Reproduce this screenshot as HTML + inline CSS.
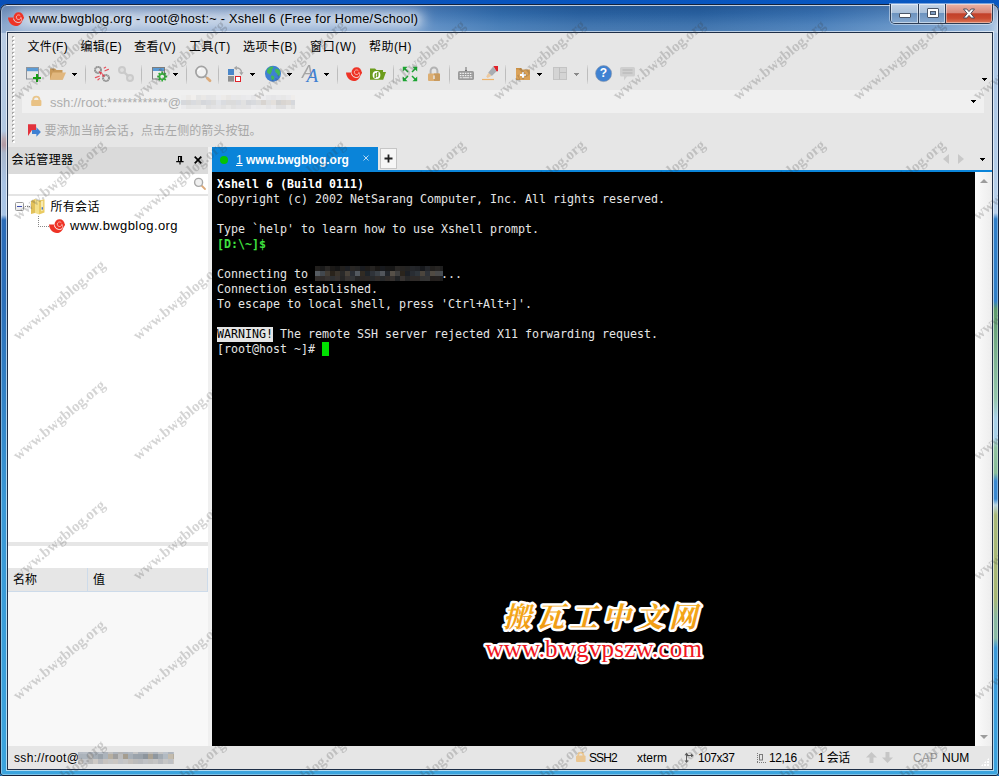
<!DOCTYPE html>
<html><head><meta charset="utf-8"><title>Xshell</title>
<style>
html,body{margin:0;padding:0;}
body{width:999px;height:776px;overflow:hidden;position:relative;background:linear-gradient(90deg,#0950b8,#0858c2);font-family:"Liberation Sans","Noto Sans CJK SC",sans-serif;font-size:12px;color:#000;}
div,span,svg{position:absolute;box-sizing:border-box;}
pre span,pre b{position:static;}
svg{overflow:visible;}
#frame{left:0;top:4px;width:999px;height:772px;border-radius:7px 7px 3px 3px;overflow:hidden;background:#3a8fd0;box-shadow:inset 0 0 0 1px #16294a;}
#client{left:8px;top:33px;width:984px;height:736px;background:#e6e6e6;box-shadow:0 0 0 1px #1f2f48,0 0 0 2px rgba(255,255,255,.6);}
#title{left:29px;top:11px;font-size:12.7px;line-height:16px;letter-spacing:.26px;white-space:nowrap;color:#000;}
.t{font-size:12px;line-height:14px;white-space:nowrap;}
#addr{left:22px;top:90px;width:962px;height:23px;background:#f0f0f0;}
#term{z-index:5;left:212px;top:172px;width:763px;height:574px;background:#000;}
#term pre{margin:0;position:absolute;left:5px;top:5px;font-family:"DejaVu Sans Mono","Liberation Mono",monospace;font-size:11.63px;line-height:15px;color:#e5e5e5;}
.sep{width:1px;height:19px;top:65px;background:linear-gradient(180deg,#dcdcdc 0,#bdbdbd 25%,#bdbdbd 75%,#dcdcdc 100%);}
.dd{width:1px;height:1px;color:#000;background:currentColor;transform:translate(2px,2px);box-shadow:-1px -1px,0 -1px,1px -1px,-2px -2px,-1px -2px,0 -2px,1px -2px,2px -2px;}
#wm{z-index:3;opacity:.22;left:0;top:0;width:999px;height:776px;overflow:hidden;pointer-events:none;}
#wm span{font-family:"Liberation Serif",serif;font-weight:bold;font-size:15px;line-height:16px;color:#3c3c3c;white-space:nowrap;transform-origin:0 100%;transform:rotate(-40deg);}
.blur2{left:0;top:0;width:0;height:0;filter:blur(.6px);}
</style></head><body>
<svg width="0" height="0" style="left:0;top:0"><defs>
<symbol id="swirl" viewBox="0 0 16 14" overflow="visible">
<path d="M0,5.6 L4.9,5.6 C5.2,8.6 7.6,10.8 10.6,10.8 C12.6,10.8 13.6,9.8 14,8 L14.4,6.4 C14.8,10.4 11.8,14 7.8,14 C3.6,14 0.3,10.4 0,5.6 Z" fill="#ee3326"/>
<circle cx="10.6" cy="5.2" r="5.05" fill="#ee3326"/>
<path d="M14.3,6.4 H16 V4.6Z" fill="#ee3326"/>
<path d="M5.6,6.9 C6.2,9.6 8.4,10.6 10.6,10.55 C11.8,10.5 12.6,10 13.2,9.2 C13.9,8.2 13.6,6.6 13,5.4" fill="none" stroke="#ffe4de" stroke-width=".7" opacity=".9"/>
<path d="M12.4,3.8 A2.3,2.3 0 1 0 12.9,5.4" fill="none" stroke="#ffe4de" stroke-width=".75" opacity=".9"/>
</symbol>
</defs></svg>
<div id="frame">
 <div style="left:0;top:0;width:999px;height:30px;background:linear-gradient(90deg,#7e9ec8 0,#86a4cc 12%,#7c9ecb 30%,#6791c6 40%,#4a80bc 44%,#3470b0 50%,#2b65a5 58%,#2a64a4 70%,#3a74b4 82%,#4f84be 88%,#6a96c8 94%,#8db0d8 99%,#b8cee8 100%)"></div>
 <div style="left:0;top:0;width:999px;height:30px;background:linear-gradient(180deg,rgba(0,20,70,.22) 0,rgba(0,20,70,.08) 30%,rgba(255,255,255,.10) 70%,rgba(255,255,255,.16) 100%)"></div>
 <div style="left:14px;top:7px;width:410px;height:17px;border-radius:8px;background:rgba(255,255,255,.56);filter:blur(6px)"></div>
 <div style="left:0;top:29px;width:8px;height:743px;background:linear-gradient(180deg,#b9cce4 0,#b2c8e2 98px,#b6a8b2 106px,#b29aa4 112px,#a8b6cc 120px,#a9c3e4 150px,#a9c5e6 182px,#2c6cb8 187px,#2c70ba 270px,#3a98d6 470px,#3ba4de 743px)"></div>
 <div style="left:992px;top:29px;width:7px;height:743px;background:linear-gradient(180deg,#a9c4e4 0,#b6cfea 180px,#2f7ec8 186px,#2f7ec8 268px,#5c9a6c 276px,#7fb594 330px,#93c6ac 366px,#a8d0e8 385px,#a8d0e8 405px,#8fc2a0 415px,#86bc98 440px,#3a88d0 448px,#3a88d0 466px,#b8d4e0 472px,#a8b878 482px,#a6b674 565px,#88b8a0 585px,#8abaa4 605px,#3a98d8 615px,#3ba2de 743px)"></div>
 <div style="left:0;top:764px;width:999px;height:8px;background:#3ba4de"></div>
 <div style="left:1px;top:1px;width:997px;height:770px;border-radius:6px 6px 2px 2px;border:1px solid rgba(255,255,255,.35)"></div>
 <div style="left:6px;top:1px;width:987px;height:1px;background:rgba(255,255,255,.55)"></div>
 <div style="left:0;top:0;width:999px;height:772px;border-radius:7px 7px 3px 3px;border:1px solid #14223c"></div>
</div>
<svg width="16" height="14" style="left:8px;top:12px"><use href="#swirl"/></svg>
<div id="title" style="text-shadow:0 0 6px rgba(255,255,255,.8)">www.bwgblog.org - root@host:~ - Xshell 6 (Free for Home/School)</div>
<!-- window buttons -->
<div style="left:890px;top:4px;width:103px;height:20px;border:1px solid #2c3c54;border-top:0;border-radius:0 0 5px 5px;overflow:hidden;box-shadow:0 0 0 1px rgba(255,255,255,.45)">
 <div style="left:0;top:0;width:28px;height:19px;background:linear-gradient(180deg,#c3d3e6 0,#a9c0da 45%,#6d93bf 50%,#86a9d0 100%);border-right:1px solid #2c3c54;box-shadow:inset 0 0 0 1px rgba(255,255,255,.5)"></div>
 <div style="left:28px;top:0;width:27px;height:19px;background:linear-gradient(180deg,#c3d3e6 0,#a9c0da 45%,#6d93bf 50%,#86a9d0 100%);border-right:1px solid #2c3c54;box-shadow:inset 0 0 0 1px rgba(255,255,255,.5)"></div>
 <div style="left:55px;top:0;width:46px;height:19px;background:linear-gradient(180deg,#e9b3a6 0,#d8877a 45%,#c2402a 52%,#c94a30 75%,#dc7a5c 100%);box-shadow:inset 0 0 0 1px rgba(255,255,255,.4)"></div>
 <div style="left:8px;top:9px;width:12px;height:5px;background:#fff;border:1px solid #4a5668;border-radius:1px"></div>
 <div style="left:36px;top:4px;width:12px;height:10px;background:#fff;border:1px solid #4a5668;border-radius:1px"></div>
 <div style="left:39px;top:7px;width:6px;height:4px;background:#7d9cc2;border:1px solid #4a5668"></div>
 <svg width="14" height="11" viewBox="0 0 14 11" style="left:71px;top:4px"><path d="M1.5,1 L4.8,1 L7,3.6 L9.2,1 L12.5,1 L8.8,5.5 L12.5,10 L9.2,10 L7,7.4 L4.8,10 L1.5,10 L5.2,5.5 Z" fill="#fff" stroke="#4a4a5a" stroke-width="1" stroke-linejoin="round"/></svg>
</div>
<div id="client"></div>
<!-- gripper -->
<div style="left:12px;top:36px;width:2px;height:108px;background:repeating-linear-gradient(180deg,#a8a8a8 0,#a8a8a8 2px,transparent 2px,transparent 4px)"></div>
<div style="left:13px;top:37px;width:2px;height:108px;background:repeating-linear-gradient(180deg,#fff 0,#fff 2px,transparent 2px,transparent 4px)"></div>
<!-- menu -->
<div class="t" style="left:27.5px;top:40px;letter-spacing:.2px">文件(F)</div>
<div class="t" style="left:80.5px;top:40px;letter-spacing:.3px">编辑(E)</div>
<div class="t" style="left:134px;top:40px;letter-spacing:.45px">查看(V)</div>
<div class="t" style="left:189px;top:40px;letter-spacing:.45px">工具(T)</div>
<div class="t" style="left:243px;top:40px;letter-spacing:.4px">选项卡(B)</div>
<div class="t" style="left:310px;top:40px;letter-spacing:.65px">窗口(W)</div>
<div class="t" style="left:369px;top:40px;letter-spacing:.45px">帮助(H)</div>
<!-- toolbar -->
<svg width="18" height="18" viewBox="0 0 18 18" style="left:25px;top:66px">
 <rect x="1.5" y="1.5" width="12" height="11.5" fill="#e6e6e6" stroke="#8e949c"/>
 <rect x="2" y="2" width="11" height="3.2" fill="#5b9bd5"/>
 <path d="M12,8 v8 M8,12 h8" stroke="#14a014" stroke-width="2" fill="none"/>
</svg>
<svg width="18" height="14" viewBox="0 0 18 14" style="left:49px;top:67px">
 <path d="M1,1.5 L6,1.5 L7.5,3 L13.5,3 L13.5,12.5 L1,12.5 Z" fill="#c99a5b"/>
 <path d="M3.5,5.5 L17,5.5 L13.8,12.8 L0.8,12.8 Z" fill="#e1b77e"/>
</svg>
<div class="dd" style="left:72px;top:73px"></div>
<div class="sep" style="left:85px"></div>
<svg width="18" height="18" viewBox="0 0 18 18" style="left:93px;top:65px">
 <g fill="none" stroke="#929292" stroke-width="2" stroke-dasharray="1.6 .3">
 <circle cx="5" cy="4.9" r="3"/>
 <circle cx="13" cy="13" r="3"/></g>
 <path d="M5.6,6.2 L9.2,7.4 L7.8,10 Z M9.2,8 L12.2,11.4 L9.4,11.6 Z" fill="#e23a48"/>
 <g stroke="#e8505c" stroke-width="1.2" fill="none" stroke-linecap="round">
 <path d="M11.2,3 L12.6,2.2 M12,5.8 L15.4,4.4"/>
 <path d="M2.4,12.6 L6.2,11.2 M5,14.8 L6.4,13.6"/></g>
</svg>
<svg width="18" height="18" viewBox="0 0 18 18" style="left:117px;top:65px">
 <g fill="#dedede" stroke="#cacaca" stroke-width="2">
 <circle cx="5" cy="4.9" r="3"/>
 <circle cx="13" cy="13" r="3"/>
 <path d="M6.6,6.6 L11.4,11.4" stroke-width="2.2"/></g>
</svg>
<div class="sep" style="left:141px"></div>
<svg width="18" height="18" viewBox="0 0 18 18" style="left:151px;top:66px">
 <rect x="1.5" y="1.5" width="12" height="11.5" fill="#ececec" stroke="#7d7d7d"/>
 <rect x="2" y="2" width="11" height="3" fill="#5b9bd5"/>
 <path d="M8.5,3 l1.2,1.4 h-2.4z" fill="#7d7d7d"/>
 <g transform="translate(11.2,10.6)">
  <g stroke="#35ae3a" stroke-width="1.7" stroke-linecap="butt"><path d="M0,-5V5M-5,0H5M-3.55,-3.55L3.55,3.55M-3.55,3.55L3.55,-3.55"/></g>
  <circle r="2.7" fill="#ececec" stroke="#35ae3a" stroke-width="1.7"/>
 </g>
</svg>
<div class="dd" style="left:173px;top:73px"></div>
<div class="sep" style="left:186px"></div>
<svg width="20" height="20" viewBox="0 0 20 20" style="left:193px;top:65px">
 <path d="M12,11 L14.6,13.6" stroke="#a6a6a6" stroke-width="1.6"/>
 <path d="M14.4,13.2 L17,15.8" stroke="#dcaa7a" stroke-width="2.8" stroke-linecap="round"/>
 <circle cx="8.4" cy="6.9" r="5.5" fill="#f1f1f1" stroke="#a2a2a2" stroke-width="1.7"/>
 <path d="M5,6 A3.6,3.6 0 0 1 7.8,3.5" stroke="#fff" stroke-width="1.3" fill="none"/>
</svg>
<div class="sep" style="left:218px"></div>
<svg width="18" height="18" viewBox="0 0 18 18" style="left:227px;top:65px">
 <rect x="1" y="4" width="6" height="6" fill="#4a86c8"/>
 <rect x="1" y="11" width="6" height="5.6" fill="#8f8f8f"/>
 <rect x="8.5" y="11.5" width="5" height="5" fill="#fff" stroke="#e0222a" stroke-width="1"/>
 <path d="M9,3.2 A4.2,4.2 0 0 1 14.4,7.6" fill="none" stroke="#a4a4a4" stroke-width="1.3"/>
 <path d="M12.2,7.2 h4.4 l-2.2,3z M9.8,0.8 v4.4 l-3,-2.2z" fill="#a4a4a4"/>
</svg>
<div class="dd" style="left:250px;top:73px"></div>
<svg width="18" height="18" viewBox="0 0 18 18" style="left:264px;top:65px">
 <circle cx="9" cy="8.7" r="8" fill="#3f80d2"/>
 <path d="M5.5,2.2 C7.5,1.2 9,1.5 9.5,2.5 C9,4 7.5,4.2 7.8,5.8 C8.5,6.8 6.5,7.6 6.8,9 C5.5,9.6 3.8,8.6 3,7 C2.6,5 4,3.2 5.5,2.2Z M11.5,4 C13.5,3.4 15.2,4.6 16,6.8 C16.6,9 15.8,10.6 14.6,11 C13.2,10.4 13.8,8.8 12.6,8 C11.2,7.2 10.6,5.2 11.5,4Z M7.4,10.6 C8.8,10.2 10.2,11 10.4,12.4 C10.2,14 9.2,15 8,15 C7.4,13.6 6.6,12 7.4,10.6Z" fill="#42b858"/>
</svg>
<div class="dd" style="left:287px;top:73px"></div>
<div style="left:302px;top:61px;font-family:'Liberation Sans',sans-serif;font-style:italic;font-size:18px;line-height:22px;color:#a6a6a6;transform:scaleX(.95);transform-origin:0 0">A</div>
<div style="left:306.5px;top:65px;font-family:'Liberation Serif',serif;font-style:italic;font-size:19px;line-height:22px;color:#3f80d2">A</div>
<div class="dd" style="left:324px;top:73px"></div>
<div class="sep" style="left:337px"></div>
<svg width="16" height="14" style="left:346px;top:67px"><use href="#swirl"/></svg>
<svg width="18" height="14" viewBox="0 0 18 14" style="left:369px;top:67px">
 <path d="M1,1.5 L6,1.5 L7.5,3 L14,3 L14,5 L17,5 L14.2,12.8 L1,12.8 Z" fill="#6c9c1c"/>
 <circle cx="7.5" cy="8" r="3.9" fill="#fff"/>
 <path d="M6.2,11 V7.6 Q6.2,6.4 7.5,6.4 M8.8,5 V8.4 Q8.8,9.6 7.5,9.6" stroke="#6c9c1c" stroke-width="1.5" fill="none"/>
</svg>
<div class="sep" style="left:393px"></div>
<svg width="16" height="16" viewBox="0 0 16 16" style="left:402px;top:66px">
 <g fill="#1ca432"><path d="M0.8,0.8 h4.8 l-4.8,4.8z M15.2,0.8 v4.8 l-4.8,-4.8z M0.8,15.2 v-4.8 l4.8,4.8z M15.2,15.2 h-4.8 l4.8,-4.8z"/></g>
 <path d="M2,2 L6,6 M14,2 L10,6 M2,14 L6,10 M14,14 L10,10" stroke="#1ca432" stroke-width="1.5"/>
</svg>
<svg width="16" height="18" viewBox="0 0 16 18" style="left:426px;top:65px">
 <path d="M4.6,9 V6 A3.4,3.6 0 0 1 11.4,6 V9" fill="none" stroke="#b2b2b2" stroke-width="2"/>
 <rect x="2" y="8.5" width="12" height="7.6" rx="1" fill="#dcae72"/>
 <path d="M8,8.5 H13 Q14,8.5 14,9.5 V15.1 Q14,16.1 13,16.1 H8Z" fill="#c89a5e"/>
 <rect x="7.3" y="10.4" width="1.4" height="3.6" fill="#e8e8e8"/>
</svg>
<div class="sep" style="left:449px"></div>
<svg width="18" height="16" viewBox="0 0 18 16" style="left:457px;top:65px">
 <path d="M9,2 V6.5 M8,5.6 H10" stroke="#6e6e6e" stroke-width="1"/>
 <rect x="1" y="6" width="16" height="9" rx="1.6" fill="#9a9a9a"/>
 <g stroke="#f0f0f0" stroke-width="1.1"><path d="M2.8,8.4 h12.6 M2.8,10.6 h12.6" stroke-dasharray="1.6 .9"/><path d="M2.8,12.8 h2 M5.6,12.8 h6.8 M13.2,12.8 h2"/></g>
</svg>
<svg width="18" height="16" viewBox="0 0 18 16" style="left:481px;top:65px">
 <path d="M12.4,1 L17,1 L17,6.2 L15.2,6.2 Z" fill="#e0222a"/>
 <path d="M12.2,1.4 L15.6,6.2 L10.8,11 L7.2,7.8 Z" fill="#a9adb2"/>
 <path d="M7.4,8 L10.6,10.8 L6.6,13 L5.2,11.6 Z" fill="#ecc9a0"/>
 <path d="M1,14.5 H13" stroke="#eeb268" stroke-width="1.2"/>
</svg>
<div class="sep" style="left:505px"></div>
<svg width="16" height="14" viewBox="0 0 16 14" style="left:515px;top:67px">
 <path d="M1,1 L6,1 L7.2,2.5 L15,2.5 L15,13 L1,13 Z" fill="#dba258"/>
 <path d="M1,1 L6,1 L7.2,2.5 L1,2.5Z" fill="#c98f45"/>
 <path d="M8,5 v6 M5,8 h6" stroke="#fff" stroke-width="2"/>
</svg>
<div class="dd" style="left:537px;top:73px"></div>
<svg width="16" height="14" viewBox="0 0 16 14" style="left:553px;top:67px">
 <rect x=".5" y=".5" width="13" height="12" fill="#d4d4d4" stroke="#c4c4c4"/>
 <path d="M6.5,.5 v12 M6.5,5.5 h7" stroke="#bebebe"/>
</svg>
<div class="dd" style="left:574px;top:73px;color:#8a8a8a"></div>
<div class="sep" style="left:587px"></div>
<svg width="18" height="18" viewBox="0 0 18 18" style="left:595px;top:65px">
 <circle cx="8.6" cy="8.6" r="8" fill="#3f82d2"/>
 <circle cx="8.6" cy="8.6" r="8" fill="none" stroke="#8a96a8" stroke-width=".6"/>
</svg>
<div style="left:598.5px;top:66px;width:10px;font-size:12px;line-height:15px;font-weight:bold;color:#fff;text-align:center">?</div>
<svg width="18" height="16" viewBox="0 0 18 16" style="left:619px;top:66px">
 <path d="M2.5,1 H14.5 Q16,1 16,2.5 V9 Q16,10.5 14.5,10.5 H8 L5,14.5 V10.5 H2.5 Q1,10.5 1,9 V2.5 Q1,1 2.5,1Z" fill="#cfcfcf"/>
 <path d="M3.5,4 h10 M3.5,7 h10" stroke="#bdbdbd" stroke-width="1.3"/>
</svg>
<div class="dd" style="left:982px;top:78px"></div>
<!-- address bar -->
<div id="addr"></div>
<svg width="14" height="14" viewBox="0 0 14 14" style="left:30px;top:95px">
 <path d="M3.2,6 V4.6 A3.1,3 0 0 1 9.4,4.6 V6" fill="none" stroke="#e9c68c" stroke-width="1.9"/>
 <rect x="1.2" y="5" width="10.2" height="6" rx="1" fill="#e9c285"/>
</svg>
<div style="left:50px;top:95px;font-size:13px;line-height:15px;color:#adadad;white-space:nowrap">ssh://root:************@</div>
<div class="blur2">
<div style="left:181px;top:95px;width:114px;height:5px;background:linear-gradient(90deg,#eeeeee 0px 5px,#eceae8 5px 10px,#f1efed 10px 15px,#e5e5e5 15px 20px,#eae8e6 20px 25px,#e5e5e7 25px 30px,#e6e6e6 30px 35px,#ececee 35px 40px,#edebe9 40px 45px,#e8e6e4 45px 50px,#e8e8ea 50px 55px,#e8e8e8 55px 60px,#e9e9eb 60px 65px,#ebebed 65px 70px,#e6e6e8 70px 75px,#f0eeec 75px 80px,#ececee 80px 85px,#e7e7e9 85px 90px,#e5e5e7 90px 95px,#e8e8ea 95px 100px,#e7e7e7 100px 105px,#eaeaec 105px 110px,#efedeb 110px 114px)"></div>
<div style="left:181px;top:100px;width:114px;height:5px;background:linear-gradient(90deg,#d6d8dc 0px 5px,#d8d8d8 5px 10px,#d9dbdf 10px 15px,#dddddd 15px 20px,#d5d7db 20px 25px,#d8dade 25px 30px,#dcdcdc 30px 35px,#e2e4e8 35px 40px,#dadce0 40px 45px,#dbdbdb 45px 50px,#dbdbdb 50px 55px,#dadce0 55px 60px,#e1e1e1 60px 65px,#d5d7db 65px 70px,#d8dade 70px 75px,#dddddd 75px 80px,#d8d4d0 80px 85px,#dfdfdf 85px 90px,#e4e0dc 90px 95px,#d2d2d2 95px 100px,#d9d5d1 100px 105px,#ddd9d5 105px 110px,#d6d8dc 110px 114px)"></div>
<div style="left:181px;top:105px;width:114px;height:4px;background:linear-gradient(90deg,#eaeaec 0px 5px,#e5e5e5 5px 10px,#e6e6e6 10px 15px,#e6e6e6 15px 20px,#eaeaea 20px 25px,#dfdfdf 25px 30px,#e2e2e4 30px 35px,#e4e4e6 35px 40px,#e1e1e1 40px 45px,#e6e6e6 45px 50px,#e0e0e0 50px 55px,#e2e2e4 55px 60px,#e2e2e2 60px 65px,#e2e2e4 65px 70px,#eaeaec 70px 75px,#e8e8ea 75px 80px,#e9e9e9 80px 85px,#e5e5e7 85px 90px,#e9e9eb 90px 95px,#dfdfdf 95px 100px,#dedee0 100px 105px,#e9e9e9 105px 110px,#e2e2e2 110px 114px)"></div>
</div>
<div class="dd" style="left:971px;top:100px"></div>
<!-- hint -->
<svg width="14" height="14" viewBox="0 0 14 14" style="left:27px;top:124px">
 <path d="M1,0.3 H9.1 V6 L5,6 L1,12 Z" fill="#e2323c"/>
 <path d="M9.4,3.3 L13.9,8 L9.4,12.7 V10 H5 V6 H9.4 Z" fill="#3f80d2"/>
</svg>
<div class="t" style="left:44.5px;top:124px;letter-spacing:.06px;color:#a8a8a8">要添加当前会话，点击左侧的箭头按钮。</div>
<!-- left panel -->
<div style="left:208px;top:147px;width:4px;height:599px;background:#f0f0f0"></div>
<div style="left:8px;top:147px;width:200px;height:27px;background:#dadada"></div>
<div class="t" style="left:11.5px;top:153px;letter-spacing:.4px">会话管理器</div>
<svg width="8" height="9" viewBox="0 0 8 9" style="left:176px;top:156px">
 <path d="M2,0.5 h4 M2.5,0.5 v5 M5.5,0 v5.5 M4.7,0.5 v5 M0.2,5.6 h7.4 M4,6 v2.6" stroke="#000" stroke-width="1.1" fill="none"/>
</svg>
<svg width="8" height="8" viewBox="0 0 8 8" style="left:194px;top:156px">
 <path d="M0.7,0.7 L7.3,7.3 M7.3,0.7 L0.7,7.3" stroke="#000" stroke-width="1.7"/>
</svg>
<div style="left:8px;top:174px;width:200px;height:20px;background:#fff;border-left:1px solid #ededed"></div>
<svg width="14" height="14" viewBox="0 0 14 14" style="left:193px;top:177px">
 <path d="M8,8 L12,12" stroke="#dcaa7a" stroke-width="1.8" stroke-linecap="round"/>
 <circle cx="5.6" cy="5.4" r="4" fill="#f0f0f0" stroke="#a8a8a8" stroke-width="1.4"/>
</svg>
<div style="left:8px;top:194px;width:200px;height:2px;background:#e4e4e4"></div>
<div style="left:8px;top:196px;width:200px;height:346px;background:#fff"></div>
<!-- tree -->
<div style="left:15px;top:202px;width:9px;height:9px;border:1px solid #989898;border-radius:1.5px;background:linear-gradient(#fff,#e8e8e8)"></div>
<div style="left:17px;top:206px;width:5px;height:1px;background:#3a4ab0"></div>
<div style="left:25px;top:206px;width:6px;height:1px;background:repeating-linear-gradient(90deg,#888 0,#888 1px,transparent 1px,transparent 2px)"></div>
<div style="left:38px;top:216px;width:1px;height:11px;background:repeating-linear-gradient(180deg,#888 0,#888 1px,transparent 1px,transparent 2px)"></div>
<div style="left:38px;top:226px;width:11px;height:1px;background:repeating-linear-gradient(90deg,#888 0,#888 1px,transparent 1px,transparent 2px)"></div>
<svg width="16" height="17" viewBox="0 0 16 17" style="left:30px;top:198px">
 <path d="M1,3 L5,1 L5,15 L1,16 Z" fill="#e2c15a"/>
 <path d="M5,1 L9,2.5 L9,16.5 L5,15 Z" fill="#f4e08c"/>
 <path d="M9,2.5 L14.5,1.2 L14.5,14.6 L9,16.5 Z" fill="#eacb62"/>
 <path d="M11,3.2 L13.2,2.7 L13.2,12.5 L11,13.2Z" fill="#f7eab0"/>
 <rect x="11.6" y="9.2" width="1.4" height="2.4" fill="#4a78c8"/>
</svg>
<div class="t" style="left:50.5px;top:200px;letter-spacing:.3px">所有会话</div>
<svg width="16" height="14" style="left:49px;top:219px"><use href="#swirl"/></svg>
<div style="left:70px;top:218px;font-size:13px;line-height:16px;letter-spacing:.4px;white-space:nowrap">www.bwgblog.org</div>
<!-- splitter + props -->
<div style="left:8px;top:546px;width:200px;height:22px;background:#fff"></div>
<div style="left:8px;top:568px;width:200px;height:24px;background:#e6e6e6;border-bottom:1px solid #cddbea;border-right:1px solid #cddbea"></div>
<div style="left:87px;top:568px;width:1px;height:24px;background:#cddbea"></div>
<div class="t" style="left:13px;top:573px">名称</div>
<div class="t" style="left:93px;top:573px">值</div>
<div style="left:8px;top:592px;width:200px;height:154px;background:#f8f8f8"></div>
<!-- tabs -->
<div style="left:212px;top:170px;width:780px;height:2px;background:#0a84d9"></div>
<div style="left:212px;top:147px;width:166px;height:25px;background:#0a84d9"></div>
<div style="left:220px;top:156px;width:8px;height:8px;border-radius:4px;background:#05c305"></div>
<div class="t" style="left:236px;top:153px;font-weight:bold;color:#fff"><u style="font-weight:normal">1</u> www.bwgblog.org</div>
<svg width="6" height="6" viewBox="0 0 6 6" style="left:363px;top:155px"><path d="M0.5,0.5 L5.5,5.5 M5.5,0.5 L0.5,5.5" stroke="#b9d9f2" stroke-width="1"/></svg>
<div style="left:380px;top:148px;width:17px;height:21px;background:#f6f6f6;border:1px solid #c6c6c6"></div>
<svg width="9" height="9" viewBox="0 0 9 9" style="left:384px;top:154px"><path d="M4.5,0.5 V8.5 M0.5,4.5 H8.5" stroke="#222" stroke-width="1.8"/></svg>
<svg width="6" height="10" viewBox="0 0 6 10" style="left:943px;top:154px"><path d="M6,0 V10 L0,5Z" fill="#c9c9c9"/></svg>
<svg width="6" height="10" viewBox="0 0 6 10" style="left:958px;top:154px"><path d="M0,0 V10 L6,5Z" fill="#c9c9c9"/></svg>
<div class="dd" style="left:980px;top:158px"></div>
<!-- terminal -->
<div id="term"><pre><b style="color:#fff">Xshell 6 (Build 0111)</b>
Copyright (c) 2002 NetSarang Computer, Inc. All rights reserved.

Type `help' to learn how to use Xshell prompt.
<b style="color:#3fe23f">[D:\~]$</b>

Connecting to                   ...
Connection established.
To escape to local shell, press 'Ctrl+Alt+]'.

<span style="background:#e5e5e5;color:#000;padding:0 0 1px 0">WARNING!</span> The remote SSH server rejected X11 forwarding request.
[root@host ~]# </pre>
<div class="blur2">
<div style="left:103px;top:94px;width:128px;height:5px;background:linear-gradient(90deg,#211f1d 0px 5px,#1a1a1a 5px 10px,#292725 10px 15px,#1c1a18 15px 20px,#161616 20px 25px,#22201e 25px 30px,#1d1f23 30px 35px,#292725 35px 40px,#252525 40px 45px,#1a1c20 45px 50px,#1e1c1a 50px 55px,#262422 55px 60px,#1a1816 60px 65px,#181a1e 65px 70px,#171717 70px 75px,#161616 75px 80px,#292725 80px 85px,#262422 85px 90px,#232323 90px 95px,#24262a 95px 100px,#212327 100px 105px,#17191d 105px 110px,#25272b 110px 115px,#22201e 115px 120px,#272523 120px 125px,#1f1f1f 125px 128px)"></div>
<div style="left:103px;top:99px;width:128px;height:5px;background:linear-gradient(90deg,#565c62 0px 5px,#42484e 5px 10px,#433d35 10px 15px,#29231b 15px 20px,#3a342c 20px 25px,#292929 25px 30px,#48423a 30px 35px,#2b2f35 35px 40px,#53595f 40px 45px,#312b23 45px 50px,#1e242a 50px 55px,#2f3339 55px 60px,#3b4147 60px 65px,#51555b 65px 70px,#21252b 70px 75px,#565048 75px 80px,#3f3f3f 80px 85px,#2a241c 85px 90px,#1c2026 90px 95px,#292d33 95px 100px,#2f353b 100px 105px,#4b453d 105px 110px,#2f3339 110px 115px,#514b43 115px 120px,#4a4a4a 120px 125px,#464c52 125px 128px)"></div>
<div style="left:103px;top:104px;width:128px;height:5px;background:linear-gradient(90deg,#322e2c 0px 5px,#302c2a 5px 10px,#373331 10px 15px,#2f3133 15px 20px,#373331 20px 25px,#262626 25px 30px,#383432 30px 35px,#343638 35px 40px,#272727 40px 45px,#2c2826 45px 50px,#2d2927 50px 55px,#282a2c 55px 60px,#312d2b 60px 65px,#282a2c 65px 70px,#302c2a 70px 75px,#363230 75px 80px,#222426 80px 85px,#383432 85px 90px,#282828 90px 95px,#2f2b29 95px 100px,#2f2b29 100px 105px,#343434 105px 110px,#353535 110px 115px,#24201e 115px 120px,#25211f 120px 125px,#1e1e1e 125px 128px)"></div>
</div>
<div style="left:110px;top:170px;width:7px;height:14px;background:#00e000"></div>
<!-- logo -->
<svg width="260" height="90" viewBox="0 0 260 90" style="left:260px;top:415px">
 <defs><linearGradient id="og" x1="0" y1="0" x2="0" y2="1"><stop offset="0" stop-color="#f7b11c"/><stop offset="1" stop-color="#ee9612"/></linearGradient></defs>
 <g font-family="'Noto Serif CJK SC','Noto Sans CJK SC',serif" font-weight="700" font-size="28" font-style="italic">
  <text x="31" y="40" textLength="194" lengthAdjust="spacing" fill="#fff" stroke="#fff" stroke-width="5" stroke-linejoin="round">搬瓦工中文网</text>
  <text x="31" y="40" textLength="194" lengthAdjust="spacing" fill="url(#og)">搬瓦工中文网</text>
 </g>
 <g font-family="'Liberation Serif',serif" font-size="25">
  <text x="13.5" y="70" textLength="216.5" lengthAdjust="spacing" fill="#fff" stroke="#fff" stroke-width="4.5" stroke-linejoin="round">www.bwgvpszw.com</text>
  <text x="13.5" y="70" textLength="216.5" lengthAdjust="spacing" fill="#f0161e">www.bwgvpszw.com</text>
 </g>
</svg>
</div>
<div style="left:975px;top:172px;width:17px;height:574px;background:linear-gradient(90deg,#fbfbfb,#ededed)"></div>
<svg width="8" height="4" viewBox="0 0 8 4" style="left:980px;top:179px"><path d="M0,4 H8 L4,0Z" fill="#9c9c9c"/></svg>
<svg width="8" height="4" viewBox="0 0 8 4" style="left:980px;top:735px"><path d="M0,0 H8 L4,4Z" fill="#9c9c9c"/></svg>
<!-- status bar -->
<div class="t" style="left:14px;top:751px;letter-spacing:.33px">ssh://root@</div>
<div class="blur2">
<div style="left:78px;top:752px;width:96px;height:2px;background:linear-gradient(90deg,#b6bcc4 0px 5px,#b8bec6 5px 10px,#aeb4bc 10px 15px,#b7bdc5 15px 20px,#bcc2ca 20px 25px,#adb3bb 25px 30px,#bfbfbf 30px 35px,#aeb4bc 35px 40px,#b4b4b4 40px 45px,#adb3bb 45px 50px,#b3b9c1 50px 55px,#c4c4c4 55px 60px,#adb3bb 60px 65px,#adb3bb 65px 70px,#bbbbbb 70px 75px,#b0b6be 75px 80px,#c4c4c4 80px 85px,#bdc3cb 85px 90px,#afb5bd 90px 95px,#b7bdc5 95px 96px)"></div>
<div style="left:78px;top:754px;width:96px;height:5px;background:linear-gradient(90deg,#abb3bb 0px 5px,#acb4bc 5px 10px,#b7b7b7 10px 15px,#a5adb5 15px 20px,#9aa2aa 20px 25px,#abb3bb 25px 30px,#b7afa1 30px 35px,#9f9f9f 35px 40px,#bcbcbc 40px 45px,#a59d8f 45px 50px,#a7afb7 50px 55px,#9ba3ab 55px 60px,#9aa2aa 60px 65px,#8d959d 65px 70px,#aaa294 70px 75px,#8f979f 75px 80px,#a2aab2 80px 85px,#b2bac2 85px 90px,#c3bbad 90px 95px,#b5ad9f 95px 96px)"></div>
<div style="left:78px;top:759px;width:96px;height:5px;background:linear-gradient(90deg,#cdc9c5 0px 5px,#c4c6ca 5px 10px,#bababa 10px 15px,#cdc9c5 15px 20px,#b8babe 20px 25px,#c7c3bf 25px 30px,#c6c6c6 30px 35px,#cac6c2 35px 40px,#c1c3c7 40px 45px,#c6c6c6 45px 50px,#c3bfbb 50px 55px,#bbbbbb 55px 60px,#b7b9bd 60px 65px,#bfc1c5 65px 70px,#bfbfbf 70px 75px,#c4c4c4 75px 80px,#b8babe 80px 85px,#c6c6c6 85px 90px,#bec0c4 90px 95px,#cbc7c3 95px 96px)"></div>
</div>
<svg width="12" height="11" viewBox="0 0 12 11" style="left:575px;top:752px">
 <path d="M3.2,4 V3.2 A2.6,2.6 0 0 1 8.4,3.2 V4" fill="none" stroke="#ecc892" stroke-width="1.7"/>
 <rect x="1" y="3.6" width="9.6" height="6.4" rx="1" fill="#eac692"/>
</svg>
<div class="t" style="left:589px;top:751px;letter-spacing:-.9px">SSH2</div>
<div class="t" style="left:637px;top:751px">xterm</div>
<svg width="10" height="11" viewBox="0 0 10 11" style="left:684px;top:752px"><path d="M2.5,1.5 V10 M2.5,3.5 H8.5" stroke="#5e5e5e" fill="none"/><path d="M0.5,3.2 L2.5,0.6 L4.5,3.2Z M0.5,8.6 L2.5,11 L4.5,8.6Z M7,1.4 L9.6,3.5 L7,5.6Z" fill="#5e5e5e"/></svg>
<div class="t" style="left:698px;top:751px;letter-spacing:-.5px">107x37</div>
<svg width="10" height="10" viewBox="0 0 10 10" style="left:757px;top:753px"><path d="M0.5,0 V9" stroke="#7a7a7a" stroke-dasharray="1 1"/><path d="M0,9.5 H9" stroke="#7a7a7a" stroke-dasharray="1 1"/><rect x="2.5" y="1.5" width="3" height="5.5" fill="none" stroke="#7a7a7a"/></svg>
<div class="t" style="left:769px;top:751px;letter-spacing:-.45px">12,16</div>
<div class="t" style="left:818px;top:751px;letter-spacing:-.6px">1 会话</div>
<svg width="11" height="11" viewBox="0 0 10 10" style="left:866px;top:752px"><path d="M5,0 L10,5 H6.8 V10 H3.2 V5 H0Z" fill="#c6c6c6"/></svg>
<svg width="11" height="11" viewBox="0 0 10 10" style="left:882px;top:752px"><path d="M5,10 L10,5 H6.8 V0 H3.2 V5 H0Z" fill="#c6c6c6"/></svg>
<div class="t" style="left:913px;top:751px;color:#9c9c9c">CAP</div>
<div class="t" style="left:942px;top:751px">NUM</div>
<div style="left:981px;top:758px;width:8px;height:8px;background:radial-gradient(circle at 1px 1px,#fff 0,#fff 1px,transparent 1.1px) 0 0/3px 3px;clip-path:polygon(100% 0,100% 100%,0 100%)"></div>
<div id="wm">
<span style="left:20px;top:-33px">www.bwgblog.org</span>
<span style="left:140px;top:-33px">www.bwgblog.org</span>
<span style="left:260px;top:-33px">www.bwgblog.org</span>
<span style="left:380px;top:-33px">www.bwgblog.org</span>
<span style="left:500px;top:-33px">www.bwgblog.org</span>
<span style="left:620px;top:-33px">www.bwgblog.org</span>
<span style="left:740px;top:-33px">www.bwgblog.org</span>
<span style="left:860px;top:-33px">www.bwgblog.org</span>
<span style="left:980px;top:-33px">www.bwgblog.org</span>
<span style="left:20px;top:87px">www.bwgblog.org</span>
<span style="left:140px;top:87px">www.bwgblog.org</span>
<span style="left:260px;top:87px">www.bwgblog.org</span>
<span style="left:380px;top:87px">www.bwgblog.org</span>
<span style="left:500px;top:87px">www.bwgblog.org</span>
<span style="left:620px;top:87px">www.bwgblog.org</span>
<span style="left:740px;top:87px">www.bwgblog.org</span>
<span style="left:860px;top:87px">www.bwgblog.org</span>
<span style="left:980px;top:87px">www.bwgblog.org</span>
<span style="left:20px;top:207px">www.bwgblog.org</span>
<span style="left:140px;top:207px">www.bwgblog.org</span>
<span style="left:260px;top:207px">www.bwgblog.org</span>
<span style="left:380px;top:207px">www.bwgblog.org</span>
<span style="left:500px;top:207px">www.bwgblog.org</span>
<span style="left:620px;top:207px">www.bwgblog.org</span>
<span style="left:740px;top:207px">www.bwgblog.org</span>
<span style="left:860px;top:207px">www.bwgblog.org</span>
<span style="left:980px;top:207px">www.bwgblog.org</span>
<span style="left:20px;top:327px">www.bwgblog.org</span>
<span style="left:140px;top:327px">www.bwgblog.org</span>
<span style="left:860px;top:327px">www.bwgblog.org</span>
<span style="left:980px;top:327px">www.bwgblog.org</span>
<span style="left:20px;top:447px">www.bwgblog.org</span>
<span style="left:140px;top:447px">www.bwgblog.org</span>
<span style="left:860px;top:447px">www.bwgblog.org</span>
<span style="left:980px;top:447px">www.bwgblog.org</span>
<span style="left:20px;top:567px">www.bwgblog.org</span>
<span style="left:140px;top:567px">www.bwgblog.org</span>
<span style="left:860px;top:567px">www.bwgblog.org</span>
<span style="left:980px;top:567px">www.bwgblog.org</span>
<span style="left:20px;top:687px">www.bwgblog.org</span>
<span style="left:140px;top:687px">www.bwgblog.org</span>
<span style="left:260px;top:687px">www.bwgblog.org</span>
<span style="left:380px;top:687px">www.bwgblog.org</span>
<span style="left:500px;top:687px">www.bwgblog.org</span>
<span style="left:620px;top:687px">www.bwgblog.org</span>
<span style="left:740px;top:687px">www.bwgblog.org</span>
<span style="left:860px;top:687px">www.bwgblog.org</span>
<span style="left:980px;top:687px">www.bwgblog.org</span>
<span style="left:20px;top:807px">www.bwgblog.org</span>
<span style="left:140px;top:807px">www.bwgblog.org</span>
<span style="left:260px;top:807px">www.bwgblog.org</span>
<span style="left:380px;top:807px">www.bwgblog.org</span>
<span style="left:500px;top:807px">www.bwgblog.org</span>
<span style="left:620px;top:807px">www.bwgblog.org</span>
<span style="left:740px;top:807px">www.bwgblog.org</span>
<span style="left:860px;top:807px">www.bwgblog.org</span>
<span style="left:980px;top:807px">www.bwgblog.org</span>
<span style="left:20px;top:927px">www.bwgblog.org</span>
<span style="left:140px;top:927px">www.bwgblog.org</span>
<span style="left:260px;top:927px">www.bwgblog.org</span>
<span style="left:380px;top:927px">www.bwgblog.org</span>
<span style="left:500px;top:927px">www.bwgblog.org</span>
<span style="left:620px;top:927px">www.bwgblog.org</span>
<span style="left:740px;top:927px">www.bwgblog.org</span>
<span style="left:860px;top:927px">www.bwgblog.org</span>
<span style="left:980px;top:927px">www.bwgblog.org</span>
</div>
</body></html>
